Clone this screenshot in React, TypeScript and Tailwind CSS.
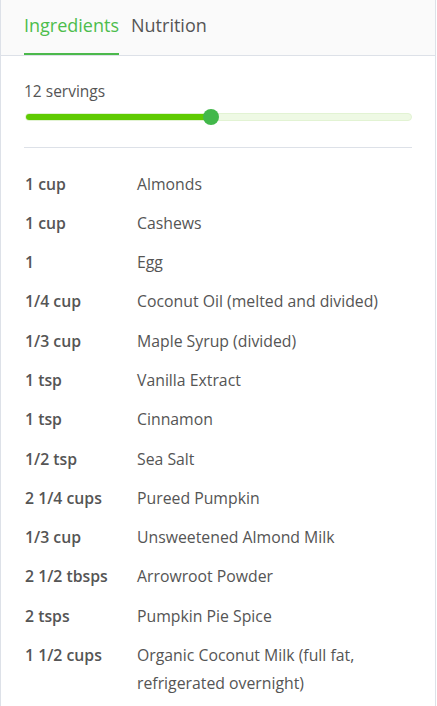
import { useState } from "react";

const ingredients: { qty: string; name: string }[] = [
  { qty: "1 cup", name: "Almonds" },
  { qty: "1 cup", name: "Cashews" },
  { qty: "1", name: "Egg" },
  { qty: "1/4 cup", name: "Coconut Oil (melted and divided)" },
  { qty: "1/3 cup", name: "Maple Syrup (divided)" },
  { qty: "1 tsp", name: "Vanilla Extract" },
  { qty: "1 tsp", name: "Cinnamon" },
  { qty: "1/2 tsp", name: "Sea Salt" },
  { qty: "2 1/4 cups", name: "Pureed Pumpkin" },
  { qty: "1/3 cup", name: "Unsweetened Almond Milk" },
  { qty: "2 1/2 tbsps", name: "Arrowroot Powder" },
  { qty: "2 tsps", name: "Pumpkin Pie Spice" },
  { qty: "1 1/2 cups", name: "Organic Coconut Milk (full fat, refrigerated overnight)" },
];

export default function App() {
  const [tab, setTab] = useState<"ingredients" | "nutrition">("ingredients");
  const servings = 12;
  const pct = 48;

  return (
    <div className="min-h-screen bg-white font-['Open_Sans','Noto_Sans',sans-serif] text-[#555]">
      <div className="w-[436px] border-x border-[#dde1e8] min-h-[706px]">
        <div className="flex h-[56px] gap-[12px] border-b border-[#dde1e8] bg-[#fafafa] px-[23px]">
          <button
            onClick={() => setTab("ingredients")}
            className={
              tab === "ingredients"
                ? "border-b-2 border-[#4cb94c] pt-[12px] text-[18px] text-[#4cbd4c] self-stretch flex"
                : "border-b-2 border-transparent pt-[12px] text-[18px] text-[#555] self-stretch flex"
            }
          >
            Ingredients
          </button>
          <button
            onClick={() => setTab("nutrition")}
            className={
              tab === "nutrition"
                ? "border-b-2 border-[#4cb94c] pt-[12px] text-[18px] text-[#4cbd4c] self-stretch flex"
                : "border-b-2 border-transparent pt-[12px] text-[18px] text-[#555] self-stretch flex"
            }
          >
            Nutrition
          </button>
        </div>

        <div className="px-[23px]">
          <div className="pt-[24px] text-[15.5px] leading-[22px]">{servings} servings</div>
          <div className="relative mt-[11px] ml-px h-[8px] rounded-full border border-[#e2f3d3] bg-[#eef9e4]">
            <div
              className="h-full rounded-full bg-[#5fcb02]"
              style={{ width: `${pct}%` }}
            />
            <div
              className="absolute top-1/2 h-[16px] w-[16px] -translate-x-1/2 -translate-y-1/2 rounded-full bg-[#42b84a]"
              style={{ left: `${pct}%` }}
            />
          </div>
          <div className="mt-[26px] border-t border-[#dde1e8]" />

          <div className="pt-[16px]">
            {ingredients.map((item, i) => (
              <div key={i} className="flex py-[5.65px] text-[15.8px] leading-[28px]">
                <div className="w-[113px] shrink-0 pl-px font-semibold">{item.qty}</div>
                <div className="pr-[30px]">{item.name}</div>
              </div>
            ))}
          </div>
        </div>
      </div>
    </div>
  );
}
